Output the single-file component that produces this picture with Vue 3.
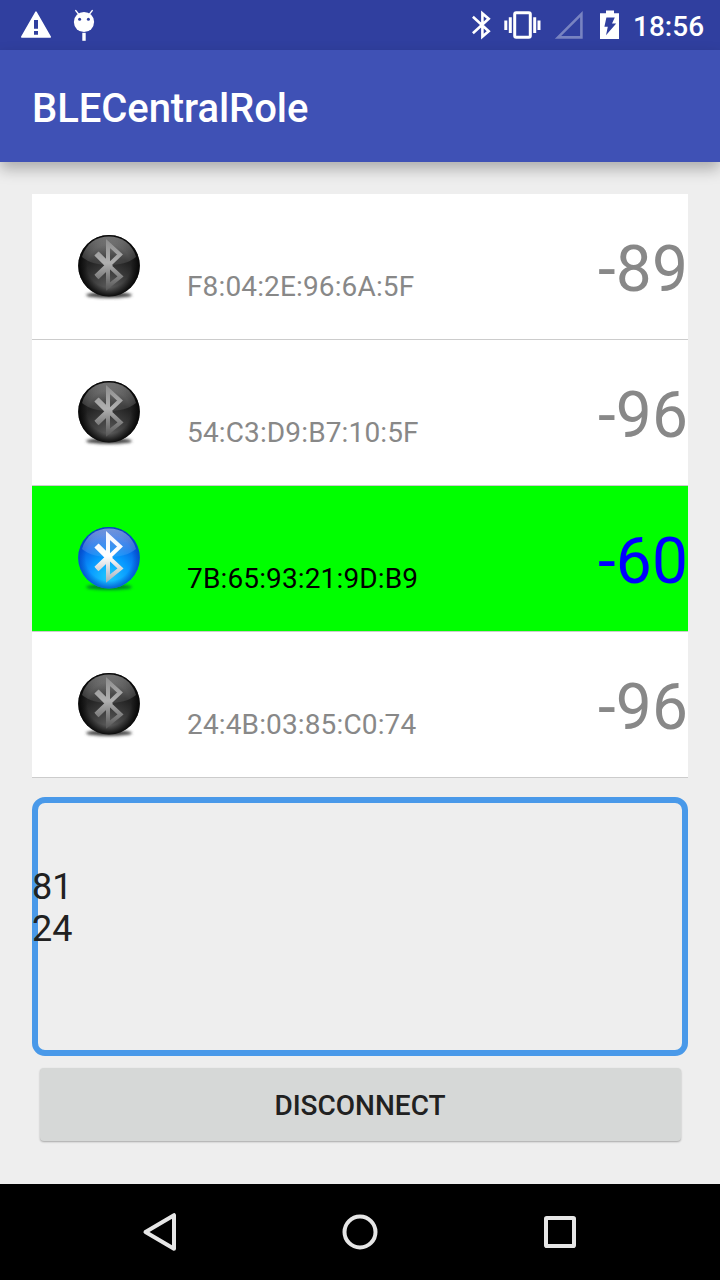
<script setup>
const devices = [
  { address: 'F8:04:2E:96:6A:5F', rssi: '-89', active: false },
  { address: '54:C3:D9:B7:10:5F', rssi: '-96', active: false },
  { address: '7B:65:93:21:9D:B9', rssi: '-60', active: true },
  { address: '24:4B:03:85:C0:74', rssi: '-96', active: false },
]
const messages = ['81', '24']
</script>

<template>
  <div class="screen">
    <header class="status">
      <svg class="warn" width="32" height="30" viewBox="0 0 32 30">
        <path fill="#fff" stroke="#fff" stroke-width="1.6" stroke-linejoin="round" d="M16 2.2 30.2 27H1.8Z" />
        <path fill="#303f9f" d="M14 10h4v8.8h-4zM14 21h4v3.8h-4z" />
      </svg>
      <svg class="bug" width="22" height="34" viewBox="0 0 22 34">
        <path stroke="#fff" stroke-width="1.5" stroke-linecap="round" d="M2.8 2.6 6 6.6M19.2 2.6 16 6.6" />
        <circle cx="11" cy="14" r="10.1" fill="#fff" />
        <circle cx="6.6" cy="11.3" r="1.5" fill="#303f9f" />
        <circle cx="15.4" cy="11.3" r="1.5" fill="#303f9f" />
        <path fill="#fff" d="M9.3 24.8h3.4v8H9.3z" />
      </svg>
      <span class="spacer"></span>
      <svg class="bt" width="20" height="30" viewBox="0 0 20 30">
        <path fill="none" stroke="#fff" stroke-width="2.6" d="M1.9 6.8 17.7 21.3 11.4 26.6V3.4L17.7 8.7 1.9 23.2" />
      </svg>
      <svg class="vibrate" width="38" height="30" viewBox="0 0 38 30">
        <rect x="10.7" y="2.7" width="15.6" height="24.6" rx="1.5" fill="none" stroke="#fff" stroke-width="3" />
        <path fill="#fff" d="M.3 10.5h3v9.5h-3zM4.8 7.3h3v15.8h-3zM29.2 7.3h3v15.8h-3zM33.5 10.5h3v9.5h-3z" />
      </svg>
      <svg class="signal" width="30" height="30" viewBox="0 0 30 30">
        <path fill="none" stroke="#7883c1" stroke-width="2.6" d="M27.4 4.2V27.4H4Z" />
      </svg>
      <svg class="battery" width="20" height="30" viewBox="0 0 20 30">
        <path fill="#fff" d="M6 .4h8v2.8h5V29H0V3.2h6z" />
        <path fill="#303f9f" d="M6.4 7.6h8.4L12 13.4h4.2L6 25.2l1.8-8.4H4.4z" />
      </svg>
      <span class="clock">18:56</span>
    </header>
    <div class="appbar"><h1>BLECentralRole</h1></div>

    <svg class="defs" width="0" height="0">
      <defs>
        <radialGradient id="ball-dark" cx=".5" cy=".87" r=".85">
          <stop offset="0" stop-color="#5c5c5c" />
          <stop offset=".3" stop-color="#404040" />
          <stop offset=".62" stop-color="#222" />
          <stop offset="1" stop-color="#2c2c2c" />
        </radialGradient>
        <radialGradient id="ball-blue" cx=".5" cy=".8" r=".8">
          <stop offset="0" stop-color="#20c8ff" />
          <stop offset=".4" stop-color="#0799ff" />
          <stop offset=".75" stop-color="#0760e4" />
          <stop offset="1" stop-color="#1746bd" />
        </radialGradient>
        <radialGradient id="rim">
          <stop offset=".7" stop-color="#000" stop-opacity="0" />
          <stop offset="1" stop-color="#000" stop-opacity=".85" />
        </radialGradient>
        <radialGradient id="rim-blue">
          <stop offset=".75" stop-color="#0045c0" stop-opacity="0" />
          <stop offset="1" stop-color="#0045c0" stop-opacity=".7" />
        </radialGradient>
        <linearGradient id="gloss" x2="0" y2="1">
          <stop offset="0" stop-color="#fff" stop-opacity=".42" />
          <stop offset="1" stop-color="#fff" stop-opacity=".08" />
        </linearGradient>
        <linearGradient id="rune-dark" gradientUnits="userSpaceOnUse" x1="0" y1="12" x2="0" y2="66">
          <stop offset="0" stop-color="#8a8a8a" />
          <stop offset=".48" stop-color="#b0b0b0" />
          <stop offset=".68" stop-color="#8a8a8a" />
          <stop offset="1" stop-color="#555" />
        </linearGradient>
        <linearGradient id="rune-blue" gradientUnits="userSpaceOnUse" x1="0" y1="12" x2="0" y2="66">
          <stop offset="0" stop-color="#eef5ff" />
          <stop offset=".5" stop-color="#fff" />
          <stop offset="1" stop-color="#a5adba" />
        </linearGradient>
        <filter id="soft" x="-20%" y="-100%" width="140%" height="300%"><feGaussianBlur stdDeviation="1.6" /></filter>
        <filter id="edge" x="-40%" y="-40%" width="180%" height="180%"><feGaussianBlur stdDeviation=".7" /></filter>
      </defs>
    </svg>

    <main>
      <ul class="list">
        <li v-for="d in devices" :key="d.address" :class="{ active: d.active }">
          <svg class="ball" width="84" height="84" viewBox="0 0 84 84">
            <ellipse cx="41" cy="70" rx="23" ry="3" :fill="d.active ? '#00852c' : '#444'" filter="url(#soft)" />
            <circle cx="41" cy="40.8" r="30.8" :fill="d.active ? 'url(#ball-blue)' : 'url(#ball-dark)'" />
            <circle cx="41" cy="40.8" r="30.8" :fill="d.active ? 'url(#rim-blue)' : 'url(#rim)'" />
            <path fill="url(#gloss)" filter="url(#edge)" d="M14 32C18 18 29 11.5 41 11.5S64 18 68 32C61 38 51 40 41 40S21 38 14 32Z" />
            <g fill="none" stroke-linejoin="miter" filter="url(#edge)">
              <path :stroke="d.active ? 'url(#rune-blue)' : 'url(#rune-dark)'" stroke-width="4" d="M28.5 29 52.5 51.5 40 61.5V18.5L52 29.5 28.5 52" />
              <path :stroke="d.active ? 'url(#rune-blue)' : 'url(#rune-dark)'" stroke-width="6" d="M28.5 28.5 40.5 40.5 28.5 52" />
            </g>
          </svg>
          <span class="address">{{ d.address }}</span>
          <span class="rssi">{{ d.rssi }}</span>
        </li>
      </ul>
      <div class="log">
        <div v-for="m in messages" :key="m">{{ m }}</div>
      </div>
      <button class="disconnect">DISCONNECT</button>
    </main>

    <nav>
      <svg width="40" height="40" viewBox="0 0 40 40"><path d="M34 3.2V36.8L5.5 20Z" /></svg>
      <svg width="40" height="40" viewBox="0 0 40 40"><circle cx="20" cy="20" r="15.5" /></svg>
      <svg width="40" height="40" viewBox="0 0 40 40"><rect x="6" y="6" width="28" height="28" rx=".8" /></svg>
    </nav>
  </div>
</template>

<style>
body { margin: 0; background: #eee; }
</style>

<style scoped>
.screen {
  width: 720px; height: 1280px; overflow: hidden;
  display: flex; flex-direction: column;
  background: #eee; color: #212121;
  font-family: Roboto, sans-serif;
}
.status {
  height: 50px; flex: none; box-sizing: border-box;
  display: flex; align-items: flex-start;
  padding: 10px 16px 0 20px;
  background: #303f9f;
}
.status svg { flex: none; display: block; }
.bug { margin-left: 21px; margin-top: -2px; }
.spacer { flex: 1; }
.vibrate { margin-left: 13px; }
.signal { margin-left: 12px; }
.battery { margin-left: 16px; }
.clock { margin-left: 13px; width: 71px; font-size: 28px; font-weight: 500; line-height: 33px; color: #fff; white-space: nowrap; }
.appbar {
  height: 112px; flex: none; display: flex; align-items: center;
  padding-left: 32px; background: #3f51b5;
  box-shadow: 0 7px 14px rgba(0, 0, 0, .28);
}
h1 { margin: 6px 0 0; color: #fff; font-size: 40px; font-weight: 500; line-height: 48px; letter-spacing: -.07px; }
.defs { position: absolute; }
main { flex: 1; padding: 32px 32px 0; display: flex; flex-direction: column; }
.list { list-style: none; margin: 0; padding: 0; }
.list li {
  height: 146px; box-sizing: border-box; display: flex; align-items: flex-start;
  padding-left: 36px; background: #fff; color: #888;
  border-bottom: 1px solid #ccc;
}
.list li.active { background: #0f0; color: #000; }
.ball { margin-top: 31px; flex: none; }
.address { flex: 1; margin: 76px 0 0 35px; font-size: 28px; line-height: 33px; letter-spacing: .14px; }
.rssi { margin-top: 38px; font-size: 64px; line-height: 75px; letter-spacing: .1px; }
.active .rssi { color: #00f; }
.log {
  height: 259px; margin-top: 19px; box-sizing: border-box;
  border: 6px solid #4999e9; border-radius: 13px;
  padding-top: 63px; font-size: 36px; line-height: 42px;
}
.log div { margin-left: -6px; }
.disconnect {
  height: 73px; margin: 12px 7.5px 0; padding: 2px 0 0;
  border: 0; border-radius: 4px; background: #d6d8d7; color: #212121;
  font: 500 28px/33px Roboto, sans-serif;
  box-shadow: 0 1px 2px rgba(0, 0, 0, .3);
}
nav {
  height: 96px; flex: none; display: flex; align-items: center; justify-content: center;
  gap: 160px; background: #000;
}
nav svg { fill: none; stroke: #e6e6e6; stroke-width: 4; stroke-linejoin: round; }
</style>
